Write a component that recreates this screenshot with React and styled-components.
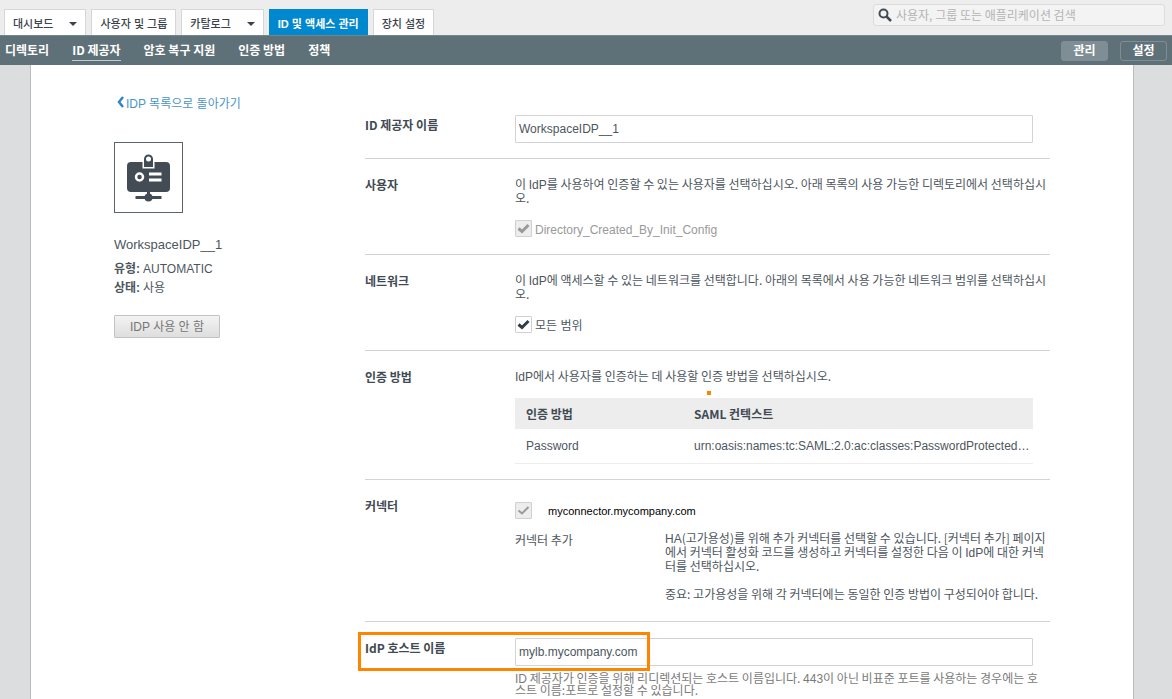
import React from 'react';
import styled, { createGlobalStyle, css } from 'styled-components';

const korean = '"Noto Sans CJK KR", "Liberation Sans", sans-serif';
const latin = '"Liberation Sans", "Noto Sans CJK KR", sans-serif';

const GlobalStyle = createGlobalStyle`
  *, *::before, *::after { box-sizing: border-box; }
  html { background: #dcddde; overflow-x: hidden; }
  body { margin: 0; font: 12px/14px ${korean}; color: #4d565e; }
  button, input, table { font: inherit; color: inherit; }
  p, h1, h2, dl, dd { margin: 0; }
`;

const Shell = styled.div`
  display: flex;
  flex-direction: column;
  min-height: 100vh;
`;

const Latin = styled.span`
  font-family: ${latin};
  line-height: 10px;
`;

const TopBar = styled.header`
  display: flex;
  justify-content: space-between;
  align-items: flex-end;
  height: 35px;
  padding: 0 7px 0 4px;
  background: #ededed;
`;

const Tabs = styled.nav`
  display: flex;
  gap: 5px;
`;

const Tab = styled.button`
  display: flex;
  align-items: center;
  justify-content: space-between;
  gap: 16px;
  height: 26px;
  padding: 2px 8px 0;
  border: 1px solid #d6d6d6;
  border-bottom: 0;
  background: #fff;
  font-family: ${latin};
  font-size: 11px;
  font-weight: 500;
  color: #3a434b;
  white-space: nowrap;
  ${(p) => p.$active && css`
    border-color: #0088ce;
    background: #0088ce;
    color: #fff;
    font-weight: 700;
  `}
`;

const Caret = styled.span`
  border: 4px solid transparent;
  border-top-color: #3a434b;
  border-bottom: 0;
`;

const Search = styled.label`
  display: flex;
  align-items: center;
  align-self: flex-start;
  gap: 4px;
  width: 292px;
  height: 22px;
  margin-top: 4px;
  padding: 0 4px;
  border: 1px solid #dcdcdc;
  border-radius: 3px;
  background: #f3f3f3;
`;

const SearchInput = styled.input`
  flex: 1;
  min-width: 0;
  padding: 0;
  border: 0;
  outline: 0;
  background: none;
  &::placeholder { color: #b4b4b4; opacity: 1; }
`;

const SubBar = styled.div`
  display: flex;
  align-items: center;
  justify-content: space-between;
  height: 30px;
  padding: 0 5px;
  background: #5f7178;
  border-top: 1px solid #75858b;
`;

const SubLinks = styled.nav`
  display: flex;
  gap: 23px;
`;

const SubLink = styled.a`
  padding: 2px 0 3px;
  border-bottom: 1px solid ${(p) => (p.$active ? '#c3cbce' : 'transparent')};
  color: #fff;
  font-weight: 700;
  text-decoration: none;
  white-space: nowrap;
`;

const Actions = styled.div`
  display: flex;
  gap: 12px;
`;

const ActionButton = styled.button`
  width: 47px;
  height: 20px;
  padding: 0 0 2px;
  border: 1px solid #7f8e94;
  border-radius: 3px;
  background: ${(p) => (p.$active ? '#7f8e94' : 'transparent')};
  color: #fff;
  font-weight: 700;
`;

const Page = styled.main`
  display: flex;
  flex: 1;
  margin: 0 38px 0 30px;
  padding: 0 83px;
  border: 1px solid #b9bbbc;
  border-width: 0 1px;
  background: #fff;
`;

const Summary = styled.aside`
  display: flex;
  flex-direction: column;
  align-items: flex-start;
  flex: 0 0 251px;
  padding-top: 30px;
  font-family: ${latin};
`;

const BackLink = styled.a`
  display: flex;
  align-items: center;
  gap: 2px;
  padding-left: 3px;
  color: #4a94c8;
  line-height: 18px;
  text-decoration: none;
  svg { margin-bottom: 4px; }
`;

const IconFrame = styled.div`
  display: grid;
  place-items: center;
  width: 69px;
  height: 71px;
  margin-top: 29px;
  border: 1px solid #5b646c;
`;

const ProviderName = styled.h1`
  margin-top: 23px;
  font-size: 13px;
  line-height: 18px;
  font-weight: 400;
`;

const Facts = styled.dl`
  margin-top: 6px;
  line-height: 19px;
`;

const Fact = styled.div`
  display: flex;
  gap: 3px;
  dt { font-weight: 700; }
`;

const DisableButton = styled.button`
  width: 106px;
  height: 23px;
  margin-top: 17px;
  padding: 0;
  border: 1px solid #c2c2c2;
  border-radius: 1px;
  background: linear-gradient(#f3f3f3, #dedede);
  color: #777;
`;

const Form = styled.form`
  flex: 1;
  min-width: 0;
  padding-top: 34px;
`;

const RowTitle = styled.h2`
  flex: 0 0 150px;
  padding-top: 1px;
  font-size: 12px;
  line-height: 14px;
  font-weight: 700;
  color: #414a52;
`;

const Row = styled.section`
  position: relative;
  display: flex;
  padding: ${(p) => (p.$input ? 16 : 18)}px 0 15px;
  border-bottom: 1px solid #d2d3d4;
  &:last-child { border-bottom: 0; }
  ${RowTitle} { padding-top: ${(p) => (p.$input ? 3 : 1)}px; }
`;

const Field = styled.div`
  display: flex;
  flex: 1;
  flex-direction: column;
  gap: ${(p) => (p.$tight ? 10 : 15)}px;
  min-width: 0;
`;

const FieldBody = styled.div`
  padding-right: 17px;
`;

const TextInput = styled.input`
  display: block;
  width: 100%;
  height: 28px;
  padding: 0 3px;
  border: 1px solid #d2d3d4;
  border-radius: 1px;
  background: #fff;
  font-family: ${latin};
`;

const Help = styled.p`
  padding: 6px 8px 0 0;
  line-height: 12px;
  color: #7a7a7a;
`;

const CheckLabel = styled.label`
  display: flex;
  align-items: center;
  gap: ${(p) => (p.$wide ? 16 : 3)}px;
  height: 19px;
  margin-top: ${(p) => (p.$wide ? 4 : 0)}px;
  color: ${(p) => p.$color || 'inherit'};
  font-family: ${latin};
  font-size: ${(p) => (p.$small ? 11 : 12)}px;
`;

const CheckBox = styled.span`
  display: grid;
  align-self: flex-start;
  width: 17px;
  height: 17px;
  > * { grid-area: 1 / 1; }
  svg { place-self: center; pointer-events: none; color: #333c44; }
`;

const CheckInput = styled.input`
  appearance: none;
  width: 17px;
  height: 17px;
  margin: 0;
  border: 1px solid #cfd0d1;
  border-radius: 1px;
  background: #fff;
  &:disabled { background: #ededed; }
  &:disabled + svg { color: #999; }
  &:not(:checked) + svg { display: none; }
`;

const Table = styled.table`
  width: 100%;
  table-layout: fixed;
  border-collapse: collapse;
  text-align: left;
  th, td { padding: 0 2px 0 11px; }
  th { height: 31px; background: #ededed; font-weight: 700; color: #414a52; }
  th:first-child { width: 168px; }
  td {
    height: 34px;
    border-bottom: 1px solid #ededed;
    font-family: ${latin};
    overflow: hidden;
    text-overflow: ellipsis;
    white-space: nowrap;
  }
`;

const Connector = styled.div`
  display: flex;
  padding: 0 4px 5px 0;
  h3 { flex: 0 0 150px; margin: 0; padding-top: 2px; font-size: 12px; font-weight: 400; }
  p + p { margin-top: 14px; }
`;

const Highlight = styled.span`
  position: absolute;
  top: 10px;
  left: -7px;
  width: 292px;
  height: 39px;
  border: 3px solid #ff8400;
  pointer-events: none;
`;

const Marker = styled.span`
  position: absolute;
  top: 40px;
  left: 342px;
  width: 4px;
  height: 4px;
  background: #ff8400;
`;

function Check({ children, disabled, thin, ...look }) {
  return (
    <CheckLabel {...look}>
      <CheckBox>
        <CheckInput type="checkbox" defaultChecked disabled={disabled} />
        <svg width="13" height="13" viewBox="0 0 13 13" fill="none" stroke="currentColor" strokeWidth={thin ? 2 : 3}>
          <path d="M1.5 6.5 5 9.5 11.5 3" />
        </svg>
      </CheckBox>
      {children}
    </CheckLabel>
  );
}

function BadgeIcon() {
  return (
    <svg width="45" height="48" viewBox="0 0 45 48" aria-hidden="true">
      <rect x="1" y="8" width="43" height="30" rx="4" fill="#434c55" />
      <path d="M16.5 7.5h12v7h-12z" fill="#fff" />
      <path d="M18 13V5a4.500 4.500 0 0 1 9 0v8z" fill="#434c55" />
      <circle cx="22.500" cy="5" r="2.500" fill="#fff" />
      <circle cx="13.500" cy="23" r="3.500" fill="none" stroke="#fff" strokeWidth="2.500" />
      <path d="M23 20h12.500M23 26h12.500" stroke="#fff" strokeWidth="3" />
      <path d="M22.500 38v6M9.500 43.500h26" stroke="#434c55" strokeWidth="3" />
      <circle cx="22.500" cy="43.500" r="4" fill="#434c55" />
    </svg>
  );
}

const tabs = [
  { text: '대시보드', menu: true },
  { text: '사용자 및 그룹' },
  { text: '카탈로그', menu: true },
  { text: 'ID 및 액세스 관리', active: true },
  { text: '장치 설정' },
];

const links = ['디렉토리', 'ID 제공자', '암호 복구 지원', '인증 방법', '정책'];

export default function App() {
  return (
    <Shell>
      <GlobalStyle />
      <TopBar>
        <Tabs>
          {tabs.map((t) => (
            <Tab key={t.text} type="button" $active={t.active}>
              {t.text}
              {t.menu && <Caret />}
            </Tab>
          ))}
        </Tabs>
        <Search>
          <svg width="14" height="14" viewBox="0 0 14 14" fill="none" stroke="#434c55" aria-hidden="true">
            <circle cx="5.500" cy="5.500" r="4" strokeWidth="2" />
            <path d="M8.500 8.500 13 13" strokeWidth="2.500" />
          </svg>
          <SearchInput type="text" aria-label="검색" placeholder="사용자, 그룹 또는 애플리케이션 검색" />
        </Search>
      </TopBar>
      <SubBar>
        <SubLinks>
          {links.map((l) => (
            <SubLink key={l} href="#" $active={l === 'ID 제공자'}>{l}</SubLink>
          ))}
        </SubLinks>
        <Actions>
          <ActionButton type="button" $active>관리</ActionButton>
          <ActionButton type="button">설정</ActionButton>
        </Actions>
      </SubBar>
      <Page>
        <Summary>
          <BackLink href="#">
            <svg width="7" height="12" viewBox="0 0 7 12" fill="none" stroke="#2f86c4" strokeWidth="2.500" aria-hidden="true">
              <path d="M6 1 2 6l4 5" />
            </svg>
            IDP 목록으로 돌아가기
          </BackLink>
          <IconFrame><BadgeIcon /></IconFrame>
          <ProviderName>WorkspaceIDP__1</ProviderName>
          <Facts>
            <Fact><dt>유형:</dt><dd>AUTOMATIC</dd></Fact>
            <Fact><dt>상태:</dt><dd>사용</dd></Fact>
          </Facts>
          <DisableButton type="button">IDP 사용 안 함</DisableButton>
        </Summary>
        <Form>
          <Row $input>
            <RowTitle><label htmlFor="idp-name">ID 제공자 이름</label></RowTitle>
            <Field>
              <FieldBody><TextInput id="idp-name" type="text" defaultValue="WorkspaceIDP__1" /></FieldBody>
            </Field>
          </Row>
          <Row>
            <RowTitle>사용자</RowTitle>
            <Field>
              <p>이 <Latin>IdP</Latin>를 사용하여 인증할 수 있는 사용자를 선택하십시오. 아래 목록의 사용 가능한 디렉토리에서 선택하십시오.</p>
              <Check disabled $color="#999">Directory_Created_By_Init_Config</Check>
            </Field>
          </Row>
          <Row>
            <RowTitle>네트워크</RowTitle>
            <Field>
              <p>이 <Latin>IdP</Latin>에 액세스할 수 있는 네트워크를 선택합니다. 아래의 목록에서 사용 가능한 네트워크 범위를 선택하십시오.</p>
              <Check>모든 범위</Check>
            </Field>
          </Row>
          <Row>
            <Marker />
            <RowTitle>인증 방법</RowTitle>
            <Field>
              <p><Latin>IdP</Latin>에서 사용자를 인증하는 데 사용할 인증 방법을 선택하십시오.</p>
              <FieldBody>
                <Table>
                  <thead>
                    <tr><th scope="col">인증 방법</th><th scope="col">SAML 컨텍스트</th></tr>
                  </thead>
                  <tbody>
                    <tr>
                      <td>Password</td>
                      <td>urn:oasis:names:tc:SAML:2.0:ac:classes:PasswordProtected…</td>
                    </tr>
                  </tbody>
                </Table>
              </FieldBody>
            </Field>
          </Row>
          <Row>
            <RowTitle>커넥터</RowTitle>
            <Field $tight>
              <Check disabled thin $wide $small $color="#000">myconnector.mycompany.com</Check>
              <Connector>
                <h3>커넥터 추가</h3>
                <div>
                  <p><Latin>HA</Latin>(고가용성)를 위해 추가 커넥터를 선택할 수 있습니다. [커넥터 추가] 페이지에서 커넥터 활성화 코드를 생성하고 커넥터를 설정한 다음 이 <Latin>IdP</Latin>에 대한 커넥터를 선택하십시오.</p>
                  <p>중요: 고가용성을 위해 각 커넥터에는 동일한 인증 방법이 구성되어야 합니다.</p>
                </div>
              </Connector>
            </Field>
          </Row>
          <Row $input>
            <Highlight />
            <RowTitle><label htmlFor="idp-host">IdP 호스트 이름</label></RowTitle>
            <Field>
              <div>
                <FieldBody>
                  <TextInput id="idp-host" type="text" defaultValue="mylb.mycompany.com" />
                </FieldBody>
                <Help><Latin>ID</Latin> 제공자가 인증을 위해 리디렉션되는 호스트 이름입니다. <Latin>443</Latin>이 아닌 비표준 포트를 사용하는 경우에는 호스트 이름:포트로 설정할 수 있습니다.</Help>
              </div>
            </Field>
          </Row>
        </Form>
      </Page>
    </Shell>
  );
}
